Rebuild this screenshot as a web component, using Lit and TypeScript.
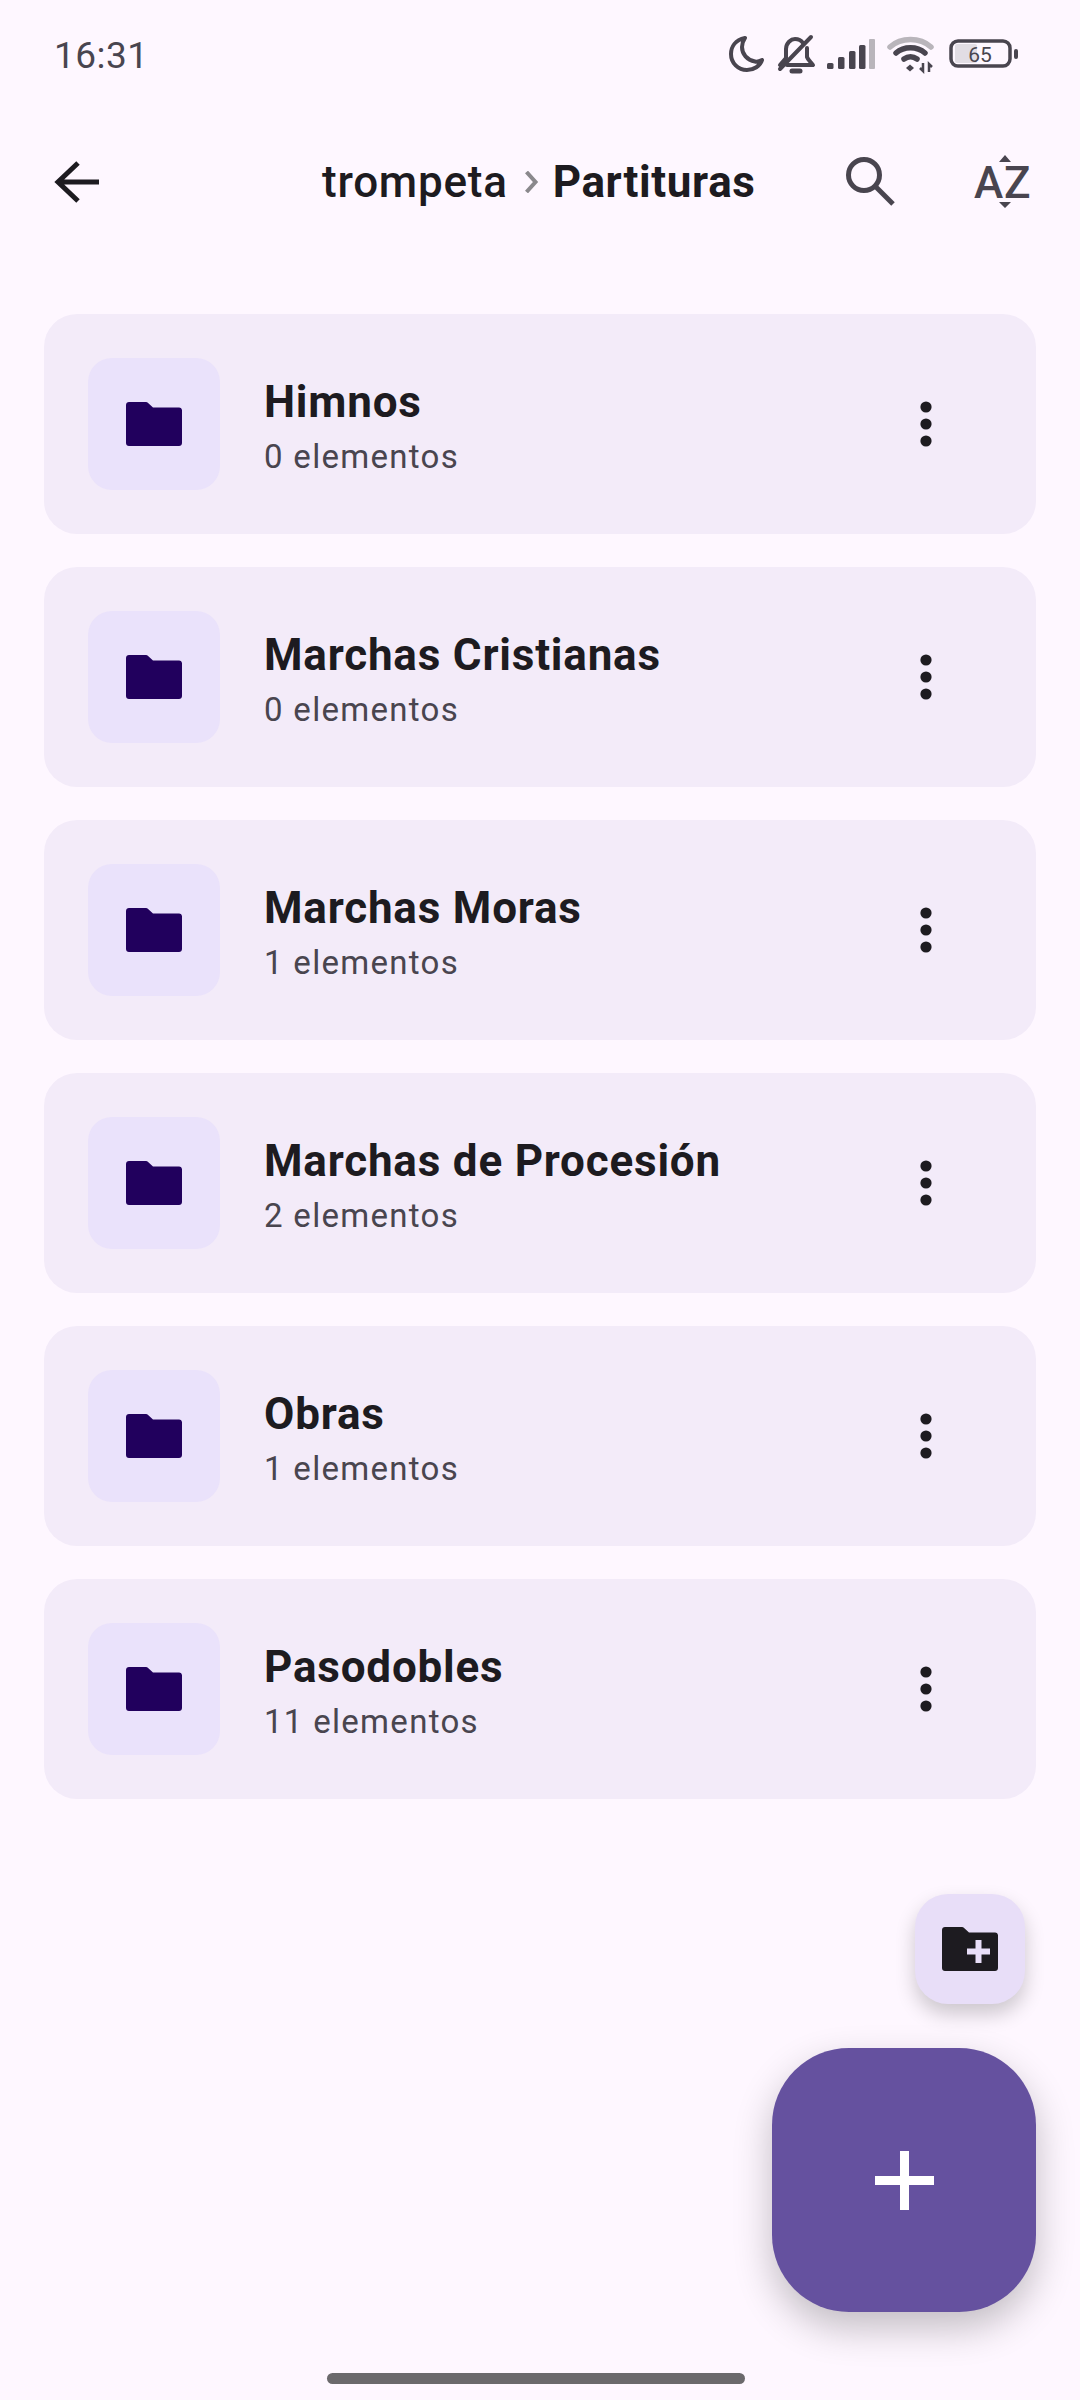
import {LitElement, html, css, svg} from 'lit';
import {customElement} from 'lit/decorators.js';

const folders = [
  {name: 'Himnos', count: 0},
  {name: 'Marchas Cristianas', count: 0},
  {name: 'Marchas Moras', count: 1},
  {name: 'Marchas de Procesión', count: 2},
  {name: 'Obras', count: 1},
  {name: 'Pasodobles', count: 11},
];

const folderPath = svg`<path d="M3 0h17c.8 0 1.500.3 2.100.9L27 5.500h26c1.700 0 3 1.300 3 3V41c0 1.700-1.300 3-3 3H3c-1.700 0-3-1.300-3-3V3c0-1.700 1.300-3 3-3z"/>`;

@customElement('app-root')
export class AppRoot extends LitElement {
  static styles = css`
    :host {
      display: flex;
      flex-direction: column;
      position: relative;
      height: 2400px;
      overflow: hidden;
      background: #fef7ff;
      font-family: Roboto, "Noto Sans", sans-serif;
      color: #1d1b20;
    }
    svg {
      display: block;
      flex: none;
    }
    .status {
      height: 108px;
      display: flex;
      align-items: center;
      justify-content: space-between;
      padding: 0 54px 0 54px;
      color: #49454f;
    }
    .time {
      font-size: 37px;
      letter-spacing: 0.5px;
      padding-top: 2px;
    }
    .status-icons {
      display: flex;
      align-items: center;
    }
    .header {
      height: 147px;
      display: flex;
      align-items: center;
      padding: 0 48px 0 54px;
    }
    .crumbs {
      flex: 1;
      display: flex;
      align-items: center;
      padding-left: 222px;
      font-size: 44px;
      font-weight: 500;
      letter-spacing: 0.75px;
    }
    .crumbs b {
      font-weight: 700;
      letter-spacing: 0.65px;
    }
    .sep {
      margin: 0 14px 0 17px;
    }
    .actions {
      display: flex;
      align-items: center;
      gap: 78px;
    }
    .list {
      display: flex;
      flex-direction: column;
      gap: 33px;
      margin-top: 59px;
      padding: 0 44px;
    }
    .card {
      height: 220px;
      box-sizing: border-box;
      display: flex;
      align-items: center;
      gap: 44px;
      padding: 0 102px 0 44px;
      border-radius: 33px;
      background: #f3ebf9;
    }
    .thumb {
      width: 132px;
      height: 132px;
      border-radius: 24px;
      background: #eae2fb;
      display: flex;
      align-items: center;
      justify-content: center;
      fill: #21005d;
    }
    .info {
      flex: 1;
      display: flex;
      flex-direction: column;
      gap: 9px;
      padding-top: 4px;
    }
    .title {
      font-size: 44px;
      font-weight: 700;
      line-height: 52px;
      letter-spacing: 0.8px;
    }
    .sub {
      font-size: 33px;
      line-height: 40px;
      letter-spacing: 1.3px;
      color: #49454f;
    }
    .fab-small {
      position: absolute;
      left: 915px;
      top: 1894px;
      width: 110px;
      height: 110px;
      border-radius: 33px;
      background: #e8def8;
      box-shadow: 0 10px 20px rgba(0, 0, 0, 0.2);
      display: flex;
      align-items: center;
      justify-content: center;
    }
    .fab-large {
      position: absolute;
      left: 772px;
      top: 2048px;
      width: 264px;
      height: 264px;
      border-radius: 77px;
      background: #65519f;
      box-shadow: 0 16px 38px rgba(0, 0, 0, 0.24);
      display: flex;
      align-items: center;
      justify-content: center;
    }
    .home-bar {
      position: absolute;
      left: 327px;
      top: 2373px;
      width: 418px;
      height: 11px;
      border-radius: 5.500px;
      background: #6b696c;
    }
  `;

  private statusIcons() {
    return html`<svg width="300" height="44" viewBox="0 0 300 44" fill="none">
      <path d="M19 6C9 8 5 15 5 22c0 9 7 16 16 16 7 0 13-4 15-10-2 1-5 2-7 1.500C21 28 16 22 16 15c0-3 1-6 3-9z" stroke="#49454f" stroke-width="4" stroke-linejoin="round"/>
      <g stroke="#49454f" stroke-width="4" stroke-linecap="round" stroke-linejoin="round">
        <path d="M54 33l6-7v-9c0-6 5-10 9-10 3 0 6 1 8 4M81 16v9c1 3 4 5 6 8H61"/>
        <path d="M54 37L85 5"/>
        <path d="M66 39h8" stroke-width="5"/>
      </g>
      <g fill="#49454f">
        <rect x="101" y="31" width="6.500" height="6" rx="1.500"/>
        <rect x="112" y="25" width="6.500" height="12" rx="1.500"/>
        <rect x="123" y="19" width="6.500" height="18" rx="1.500"/>
        <rect x="133" y="13" width="6.500" height="24" rx="1.500"/>
        <rect x="143" y="7" width="6" height="30" rx="1" fill="#b9b5bb"/>
      </g>
      <g fill="none" stroke-linecap="round">
        <path d="M164 15c11-10 30-10 41 0" stroke="#b9b5bb" stroke-width="5.500"/>
        <path d="M170 21c8-7 21-7 29 0" stroke="#49454f" stroke-width="5.500"/>
        <path d="M178 27c4-3 9-3 13 0" stroke="#49454f" stroke-width="5.500"/>
      </g>
      <path d="M180 36l4-3.500 4 3.500-4 3.500z" fill="#49454f"/>
      <path d="M197 31v8l-3-3M203 40v-8l3 3" stroke="#49454f" stroke-width="2.500" fill="none"/>
      <rect x="225" y="9" width="59" height="25" rx="7" stroke="#49454f" stroke-width="3.500"/>
      <rect x="229" y="12" width="22" height="19" rx="2" fill="#e2dde4"/>
      <text x="254" y="30" text-anchor="middle" font-family="Roboto" font-size="21" fill="#49454f">65</text>
      <rect x="288" y="17" width="4" height="10" rx="2" fill="#49454f"/>
    </svg>`;
  }

  private renderCard(f: {name: string; count: number}) {
    return html`<div class="card">
      <div class="thumb">
        <svg width="56" height="44" viewBox="0 0 56 44">${folderPath}</svg>
      </div>
      <div class="info">
        <div class="title">${f.name}</div>
        <div class="sub">${f.count} elementos</div>
      </div>
      <svg width="16" height="50" viewBox="0 0 16 50" fill="#1d1b20">
        <circle cx="8" cy="8" r="5.600"/><circle cx="8" cy="25" r="5.600"/><circle cx="8" cy="42" r="5.600"/>
      </svg>
    </div>`;
  }

  render() {
    return html`
      <div class="status">
        <span class="time">16:31</span>
        <div class="status-icons">${this.statusIcons()}</div>
      </div>
      <div class="header">
        <svg width="46" height="44" viewBox="0 0 46 44" fill="none" stroke="#1d1b20" stroke-width="5">
          <path d="M24 3L4 22l20 19M4 22h41"/>
        </svg>
        <div class="crumbs">
          <span>trompeta</span>
          <svg class="sep" width="14" height="22" viewBox="0 0 14 22" fill="none" stroke="#8a888c" stroke-width="4"><path d="M1.500 1l9 10-9 10"/></svg>
          <b>Partituras</b>
        </div>
        <div class="actions">
          <svg width="50" height="50" viewBox="0 0 50 50" fill="none" stroke="#49454f" stroke-width="5">
            <circle cx="18" cy="18" r="15.500"/><path d="M28 28l19 19"/>
          </svg>
          <svg width="58" height="57" viewBox="0 0 58 57" fill="#49454f">
            <text x="0" y="45" font-family="Roboto" font-size="44" font-weight="500">A</text>
            <text x="30" y="45" font-family="Roboto" font-size="44" font-weight="500">Z</text>
            <path d="M31 2l6 7H25zM31 55l-6-6h12z"/>
          </svg>
        </div>
      </div>
      <div class="list">${folders.map((f) => this.renderCard(f))}</div>
      <div class="fab-small">
        <svg width="56" height="44" viewBox="0 0 56 44" fill="#1d1b20">
          ${folderPath}
          <path d="M33.500 13h6v8.500H48v6h-8.500V36h-6v-8.500H25v-6h8.500z" fill="#e8def8"/>
        </svg>
      </div>
      <div class="fab-large">
        <svg width="59" height="59" viewBox="0 0 59 59" fill="#fff">
          <path d="M25 0h9v25h25v9H34v25h-9V34H0v-9h25z"/>
        </svg>
      </div>
      <div class="home-bar"></div>
    `;
  }
}
